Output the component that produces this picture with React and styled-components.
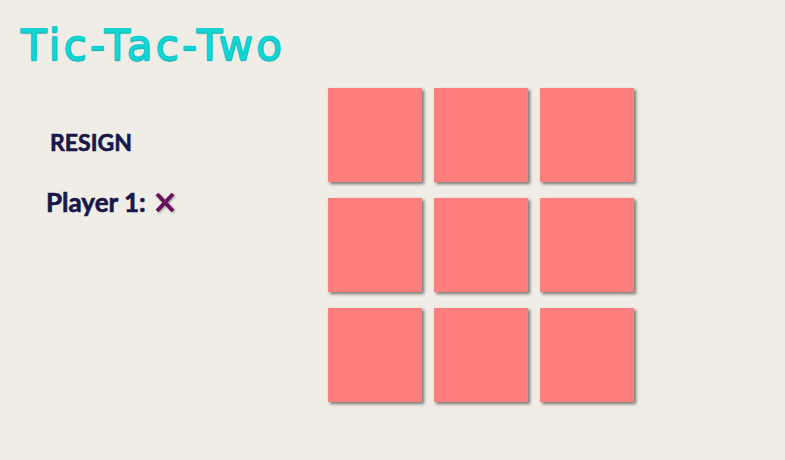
import React from 'react';
import styled, { createGlobalStyle } from 'styled-components';

const GlobalStyle = createGlobalStyle`
  html, body {
    margin: 0;
    padding: 0;
    background: #f0ede6;
    font-family: Lato, "Liberation Sans", sans-serif;
  }
`;

const Page = styled.div`
  width: 785px;
  height: 460px;
  background: #f0ede6;
  overflow: hidden;
`;

const Title = styled.h1`
  margin: 0;
  padding: 21px 0 0 21px;
  font-family: "DejaVu Sans", sans-serif;
  font-size: 42px;
  line-height: 50px;
  font-weight: normal;
  color: #14d8d8;
  letter-spacing: 3.3px;
  -webkit-text-stroke: 1.4px #10caca;
  text-shadow: 0 1px 1px #088a8a, 0 -1px 0 #8af0f0;
`;

const Main = styled.div`
  display: flex;
  margin-top: 17px;
`;

const Side = styled.div`
  box-sizing: border-box;
  width: 328px;
  padding-left: 46px;
  display: flex;
  flex-direction: column;
`;

const Resign = styled.button`
  align-self: flex-start;
  margin: 40px 0 0 4px;
  padding: 0;
  border: none;
  background: none;
  font-family: inherit;
  font-size: 23px;
  font-weight: bold;
  color: #17174a;
  -webkit-text-stroke: 0.6px #17174a;
  cursor: pointer;
`;

const PlayerRow = styled.div`
  display: flex;
  align-items: center;
  gap: 9px;
  margin-top: 30px;
  font-size: 26px;
  font-weight: bold;
  color: #17174a;
  -webkit-text-stroke: 0.6px #17174a;
`;

const Mark = styled.svg`
  width: 20px;
  height: 21px;
  filter: drop-shadow(1px 1px 1px rgba(0, 0, 0, 0.35));
`;

const Board = styled.div`
  display: grid;
  grid-template-columns: repeat(3, 94px);
  grid-auto-rows: 94px;
  column-gap: 12px;
  row-gap: 16px;
`;

const Cell = styled.div`
  background: #ff7f7f;
  box-shadow: 2px 2px 3px rgba(50, 50, 50, 0.65);
  cursor: pointer;
`;

const Cross = () => (
  <Mark viewBox="0 0 20 21">
    <path d="M2 2 L18 19 M18 2 L2 19" stroke="#6a0f5f" strokeWidth="4" strokeLinecap="butt" />
  </Mark>
);

const App = () => (
  <Page>
    <GlobalStyle />
    <Title>Tic-Tac-Two</Title>
    <Main>
      <Side>
        <Resign>RESIGN</Resign>
        <PlayerRow>
          Player 1: <Cross />
        </PlayerRow>
      </Side>
      <Board>
        {Array.from({ length: 9 }).map((_, i) => (
          <Cell key={i} />
        ))}
      </Board>
    </Main>
  </Page>
);

export default App;
